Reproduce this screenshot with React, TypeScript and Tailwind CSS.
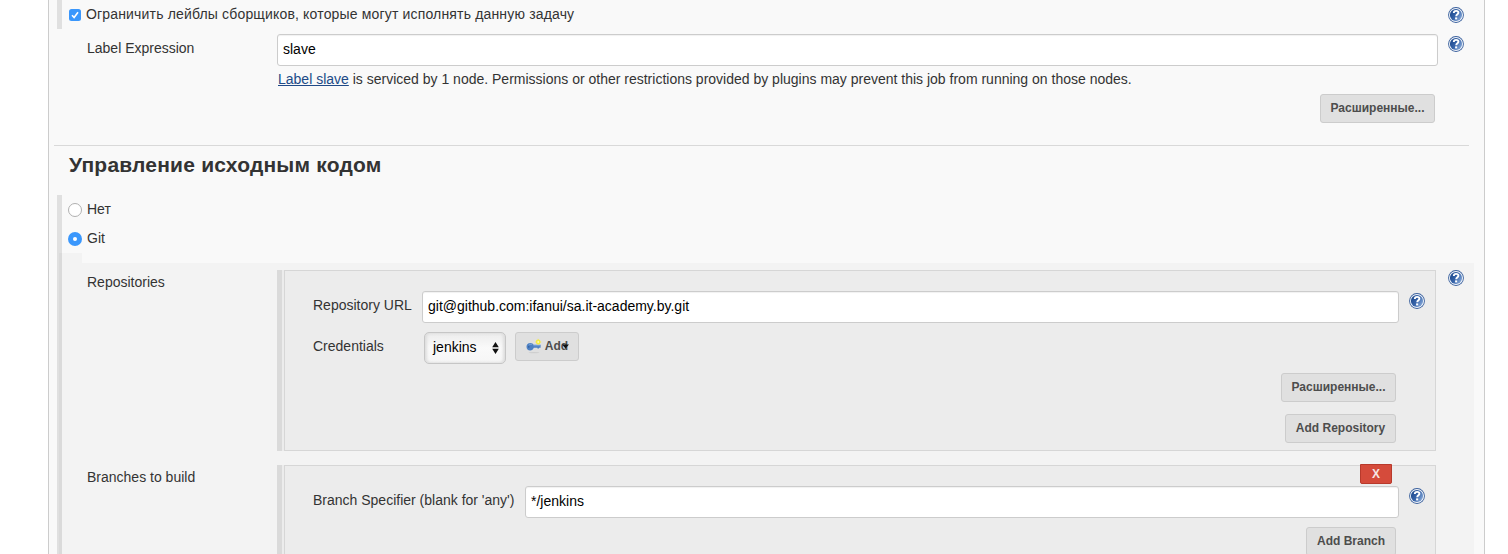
import React from 'react';

function Help({ className = '' }: { className?: string }) {
  return (
    <svg className={`block h-4 w-4 shrink-0 ${className}`} viewBox="0 0 16 16" role="img">
      <defs>
        <linearGradient id="helpFill" x1="0" y1="0.2" x2="1" y2="0.8">
          <stop offset="0" stopColor="#1c488c" />
          <stop offset="0.5" stopColor="#3865aa" />
          <stop offset="1" stopColor="#8fb0de" />
        </linearGradient>
      </defs>
      <circle cx="8" cy="8" r="7.9" fill="#3a609d" />
      <circle cx="8" cy="8" r="7" fill="#f4f7fb" />
      <circle cx="8" cy="8" r="6.1" fill="url(#helpFill)" />
      <path d="M5.8 6C5.8 4.5 6.7 3.9 8.1 3.9C9.5 3.9 10.4 4.7 10.4 5.8C10.4 7.3 8.2 7.3 8.2 9.3" fill="none" stroke="#fff" strokeWidth="1.9" />
      <rect x="7.1" y="10.4" width="2.1" height="2" fill="#fff" />
    </svg>
  );
}

function Button({ children, className = '' }: { children: React.ReactNode; className?: string }) {
  return (
    <button
      className={`flex h-[29px] shrink-0 items-center justify-center whitespace-nowrap rounded-[3px] border border-[#cccccc] bg-[#e0e0e0] pb-px text-[12px] font-bold text-[#4d4d4d] ${className}`}
    >
      {children}
    </button>
  );
}

function TextInput({ value, className = '' }: { value: string; className?: string }) {
  return (
    <input
      readOnly
      value={value}
      className={`h-8 rounded-[3px] border border-[#cccccc] bg-white px-[5px] pb-[3px] text-[14px] text-black shadow-[inset_0_1px_1px_rgba(0,0,0,0.06)] outline-none ${className}`}
    />
  );
}

function Radio({ checked = false }: { checked?: boolean }) {
  return checked ? (
    <span className="flex h-[14px] w-[14px] items-center justify-center rounded-full bg-[#3a97fc]">
      <span className="h-1 w-1 rounded-full bg-white" />
    </span>
  ) : (
    <span className="h-[14px] w-[14px] rounded-full border border-[#b0b0b0] bg-white" />
  );
}

function KeyIcon() {
  return (
    <svg className="block h-4 w-4" viewBox="0 0 16 16">
      <ellipse cx="8" cy="14.6" rx="5.5" ry="0.7" fill="#cdcdcd" />
      <path d="M4.2 4.9C6.2 4.9 7.2 5.8 7.6 6.7H14.6V9.8H13V10.6H11.4V9.8H7.8C7.2 11.4 6 12.4 4.2 12.4C1.9 12.4 0.5 10.8 0.5 8.7C0.5 6.5 2 4.9 4.2 4.9Z" fill="#4d80c3" />
      <path d="M3 6.3H6.2M7.4 7.7H14" stroke="#7ba5dc" strokeWidth="0.9" />
      <circle cx="2.8" cy="8.9" r="0.8" fill="#2f5b9b" />
      <circle cx="12.2" cy="4" r="2.4" fill="#f5ec3d" />
      <path d="M12.2 0.9V7M9.2 4H15.2" stroke="#f3ea58" strokeWidth="0.8" />
      <circle cx="12.2" cy="4" r="0.9" fill="#fffbb0" />
    </svg>
  );
}

function Section({ className = '', children }: { className?: string; children: React.ReactNode }) {
  return (
    <div className={`flex w-[1159px] bg-[#ececec] ${className}`}>
      <div className="mr-[2px] w-[5px] shrink-0 bg-[#dadada]" />
      <div className="min-w-0 flex-1 border border-[#d6d6d6]">{children}</div>
    </div>
  );
}

export default function App() {
  return (
    <div
      className="h-[554px] w-[1508px] overflow-hidden bg-white text-[14px] leading-[18px] text-[#333333]"
      style={{ fontFamily: '"Liberation Sans", Arial, sans-serif' }}
    >
      <main className="ml-12 h-full w-[1437px] border-x border-[#cccccc] bg-[#f9f9f9]">
        <div className="flex h-[29px] pl-2">
          <div className="w-[5px] bg-[#e0e0e0]" />
          <div className="ml-[7px] mt-[9px] flex h-3 w-3 items-center justify-center rounded-[2.5px] bg-[#3a97fc]">
            <svg className="h-[10px] w-[10px]" viewBox="0 0 10 10">
              <path d="M2 5.3L4.1 7.5L8 2.3" fill="none" stroke="#fff" strokeWidth="1.6" />
            </svg>
          </div>
          <span className="ml-[5px] mt-[5px] whitespace-nowrap tracking-[0.165px]">
            Ограничить лейблы сборщиков, которые могут исполнять данную задачу
          </span>
          <Help className="ml-auto mr-5 mt-[7px]" />
        </div>

        <div className="flex h-[41px] pl-[38px]">
          <span className="mt-[10px] w-[190px]">Label Expression</span>
          <TextInput value="slave" className="mt-[5px] w-[1161px]" />
          <Help className="ml-[10px] mt-[7px]" />
        </div>
        <p className="h-6 whitespace-nowrap pl-[229px]">
          <a className="text-[#204a87] underline">Label slave</a> is serviced by 1 node. Permissions or other
          restrictions provided by plugins may prevent this job from running on those nodes.
        </p>
        <div className="flex h-[51px] justify-end pr-[49px]">
          <Button className="w-[115px]">Расширенные...</Button>
        </div>
        <div className="ml-[5px] h-px w-[1415px] bg-[#d9d9d9]" />
        <h2 className="h-[49px] whitespace-nowrap pl-5 pt-[7px] text-[21px] font-bold leading-[24px] tracking-[0.2px]">
          Управление исходным кодом
        </h2>

        <div className="ml-2 h-[58px] border-l-[5px] border-[#e0e0e0] pl-[6px]">
          <label className="flex h-[29px] items-center gap-[5px]">
            <Radio />
            <span className="pb-[2px]">Нет</span>
          </label>
          <label className="flex h-[29px] items-center gap-[5px]">
            <Radio checked />
            <span className="pb-[2px]">Git</span>
          </label>
        </div>

        <div className="ml-2 flex h-[301px] w-[1417px]">
          <div className="w-[2px] bg-[#e0e0e0]" />
          <div className="w-[3px] bg-[#dadada]" />
          <div className="flex-1 bg-[#f3f3f3]">
            <div className="ml-5 h-[10px] bg-[#f9f9f9]" />
            <div className="flex pl-[25px] pt-[7px]">
              <span className="mt-[3px] w-[190px]">Repositories</span>
              <Section className="h-[181px]">
                <div className="flex pl-7 pt-5">
                  <span className="mt-[5px] w-[109px] whitespace-nowrap">Repository URL</span>
                  <TextInput value="git@github.com:ifanui/sa.it-academy.by.git" className="w-[977px]" />
                  <Help className="ml-[10px] mt-[2px]" />
                </div>
                <div className="flex pl-7 pt-[9px]">
                  <span className="mt-[5px] w-[111px]">Credentials</span>
                  <div className="flex h-8 w-[82px] items-center rounded-[5px] border border-[#c6c6c6] bg-gradient-to-b from-[#ececec] via-[#fafafa] to-[#f6f6f6] pl-2 pr-[6px] text-black shadow-[inset_2px_0_3px_#dddddd,inset_-2px_0_3px_#dddddd]">
                    <span className="pb-[2px]">jenkins</span>
                    <svg className="ml-auto h-3 w-[7px]" viewBox="0 0 7 12">
                      <path d="M3.5 0L6.8 5.2H0.2ZM3.5 12L0.2 6.8H6.8Z" fill="#111" />
                    </svg>
                  </div>
                  <Button className="relative ml-[9px] w-16 gap-[3px]">
                    <KeyIcon />
                    Add
                    <svg className="absolute left-[46px] top-[10px] h-[6px] w-[7px]" viewBox="0 0 7 6">
                      <path d="M0 1.5H7L3.5 5.5Z" fill="#111" />
                    </svg>
                  </Button>
                </div>
                <div className="flex flex-col items-end gap-3 pr-[39px] pt-[9px]">
                  <Button className="w-[115px]">Расширенные...</Button>
                  <Button className="w-[111px]">Add Repository</Button>
                </div>
              </Section>
              <Help className="ml-3" />
            </div>

            <div className="flex pl-[25px] pt-[14px]">
              <span className="mt-[3px] w-[190px]">Branches to build</span>
              <Section className="h-[120px]">
                <div className="relative flex pl-7 pt-5">
                  <button className="absolute -top-[2px] right-[43px] h-5 w-8 rounded-b-[2px] border border-[#b83a2c] bg-[#d54b3b] text-[12px] font-bold leading-[18px] text-[#f6e5e2]">
                    X
                  </button>
                  <span className="mt-[5px] w-[212px] whitespace-nowrap">Branch Specifier (blank for 'any')</span>
                  <TextInput value="*/jenkins" className="w-[874px]" />
                  <Help className="ml-[10px] mt-[2px]" />
                </div>
                <div className="flex justify-end pr-[39px] pt-[9px]">
                  <Button className="w-[90px]">Add Branch</Button>
                </div>
              </Section>
            </div>
          </div>
        </div>
      </main>
    </div>
  );
}
